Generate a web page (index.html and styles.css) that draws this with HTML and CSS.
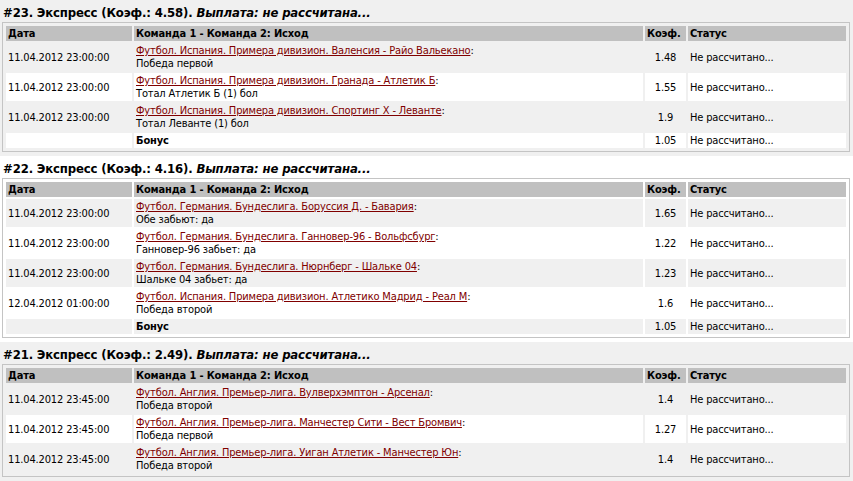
FILE: index.html
```html
<!DOCTYPE html>
<html lang="ru">
<head>
    <meta charset="UTF-8">
    <title>Экспрессы</title>
    <link rel="stylesheet" href="styles.css">
</head>
<body>

    <!-- Ставка #23 -->
    <div class="bet">
        <h2 class="bet-title">#23. Экспресс (Коэф.: 4.58). <em>Выплата: не рассчитана...</em></h2>
        <table class="bet-table">
            <colgroup>
                <col class="col-date">
                <col>
                <col class="col-coef">
                <col class="col-status">
            </colgroup>
            <tr>
                <th>Дата</th>
                <th>Команда 1 - Команда 2: Исход</th>
                <th>Коэф.</th>
                <th>Статус</th>
            </tr>
            <tr>
                <td class="date">11.04.2012 23:00:00</td>
                <td class="event"><a href="#">Футбол. Испания. Примера дивизион. Валенсия - Райо Вальекано</a>:<br>Победа первой</td>
                <td class="coef">1.48</td>
                <td class="status">Не рассчитано...</td>
            </tr>
            <tr>
                <td class="date">11.04.2012 23:00:00</td>
                <td class="event"><a href="#">Футбол. Испания. Примера дивизион. Гранада - Атлетик Б</a>:<br>Тотал Атлетик Б (1) бол</td>
                <td class="coef">1.55</td>
                <td class="status">Не рассчитано...</td>
            </tr>
            <tr>
                <td class="date">11.04.2012 23:00:00</td>
                <td class="event"><a href="#">Футбол. Испания. Примера дивизион. Спортинг Х - Леванте</a>:<br>Тотал Леванте (1) бол</td>
                <td class="coef">1.9</td>
                <td class="status">Не рассчитано...</td>
            </tr>
            <tr>
                <td></td>
                <td class="bonus">Бонус</td>
                <td class="coef">1.05</td>
                <td class="status">Не рассчитано...</td>
            </tr>
        </table>
    </div>

    <!-- Ставка #22 -->
    <div class="bet">
        <h2 class="bet-title">#22. Экспресс (Коэф.: 4.16). <em>Выплата: не рассчитана...</em></h2>
        <table class="bet-table">
            <colgroup>
                <col class="col-date">
                <col>
                <col class="col-coef">
                <col class="col-status">
            </colgroup>
            <tr>
                <th>Дата</th>
                <th>Команда 1 - Команда 2: Исход</th>
                <th>Коэф.</th>
                <th>Статус</th>
            </tr>
            <tr>
                <td class="date">11.04.2012 23:00:00</td>
                <td class="event"><a href="#">Футбол. Германия. Бундеслига. Боруссия Д. - Бавария</a>:<br>Обе забьют: да</td>
                <td class="coef">1.65</td>
                <td class="status">Не рассчитано...</td>
            </tr>
            <tr>
                <td class="date">11.04.2012 23:00:00</td>
                <td class="event"><a href="#">Футбол. Германия. Бундеслига. Ганновер-96 - Вольфсбург</a>:<br>Ганновер-96 забьет: да</td>
                <td class="coef">1.22</td>
                <td class="status">Не рассчитано...</td>
            </tr>
            <tr>
                <td class="date">11.04.2012 23:00:00</td>
                <td class="event"><a href="#">Футбол. Германия. Бундеслига. Нюрнберг - Шальке 04</a>:<br>Шальке 04 забьет: да</td>
                <td class="coef">1.23</td>
                <td class="status">Не рассчитано...</td>
            </tr>
            <tr>
                <td class="date">12.04.2012 01:00:00</td>
                <td class="event"><a href="#">Футбол. Испания. Примера дивизион. Атлетико Мадрид - Реал М</a>:<br>Победа второй</td>
                <td class="coef">1.6</td>
                <td class="status">Не рассчитано...</td>
            </tr>
            <tr>
                <td></td>
                <td class="bonus">Бонус</td>
                <td class="coef">1.05</td>
                <td class="status">Не рассчитано...</td>
            </tr>
        </table>
    </div>

    <!-- Ставка #21 -->
    <div class="bet">
        <h2 class="bet-title">#21. Экспресс (Коэф.: 2.49). <em>Выплата: не рассчитана...</em></h2>
        <table class="bet-table">
            <colgroup>
                <col class="col-date">
                <col>
                <col class="col-coef">
                <col class="col-status">
            </colgroup>
            <tr>
                <th>Дата</th>
                <th>Команда 1 - Команда 2: Исход</th>
                <th>Коэф.</th>
                <th>Статус</th>
            </tr>
            <tr>
                <td class="date">11.04.2012 23:45:00</td>
                <td class="event"><a href="#">Футбол. Англия. Премьер-лига. Вулверхэмптон - Арсенал</a>:<br>Победа второй</td>
                <td class="coef">1.4</td>
                <td class="status">Не рассчитано...</td>
            </tr>
            <tr>
                <td class="date">11.04.2012 23:45:00</td>
                <td class="event"><a href="#">Футбол. Англия. Премьер-лига. Манчестер Сити - Вест Бромвич</a>:<br>Победа первой</td>
                <td class="coef">1.27</td>
                <td class="status">Не рассчитано...</td>
            </tr>
            <tr>
                <td class="date">11.04.2012 23:45:00</td>
                <td class="event"><a href="#">Футбол. Англия. Премьер-лига. Уиган Атлетик - Манчестер Юн</a>:<br>Победа второй</td>
                <td class="coef">1.4</td>
                <td class="status">Не рассчитано...</td>
            </tr>
        </table>
    </div>

</body>
</html>
```

FILE: styles.css
```css
body {
    margin: 0;
    background-color: #f0f0f0;
    font-family: "DejaVu Sans Condensed", "DejaVu Sans", sans-serif;
    font-size: 11px;
    line-height: 13px;
    letter-spacing: -0.15px;
    color: #000;
}

/* Bet blocks, every second one is white */
.bet {
    padding: 0 3px 4px 2px;
    background-color: #f0f0f0;
}

.bet:nth-child(even) {
    background-color: #fff;
}

.bet-title {
    margin: 0;
    padding: 4px 0 1px 1px;
    font-size: 13px;
    line-height: 17px;
    font-weight: bold;
}

.bet-title em {
    font-style: italic;
}

/* Table */
.bet-table {
    width: 100%;
    table-layout: fixed;
    border: 1px solid #c4c4c4;
    border-spacing: 2px;
    padding: 1px;
}

.col-date {
    width: 126px;
}

.col-coef {
    width: 41px;
}

.col-status {
    width: 158px;
}

.bet-table th,
.bet-table td {
    padding: 1px 2px;
    white-space: nowrap;
    overflow: hidden;
}

.bet-table th {
    background-color: #c0c0c0;
    text-align: left;
    font-weight: bold;
}

.bet-table tr:nth-child(even) td {
    background-color: #f0f0f0;
}

.bet-table tr:nth-child(odd) td {
    background-color: #fff;
}

.bet-table td.coef {
    text-align: center;
}

.bet-table td.bonus {
    font-weight: bold;
}

.event a {
    color: #800000;
}
```
